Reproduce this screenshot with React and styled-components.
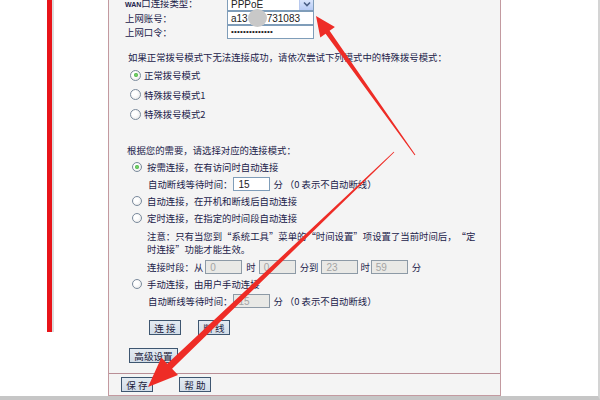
import styled, { createGlobalStyle } from 'styled-components';

const GlobalStyle = createGlobalStyle`
  html, body {
    margin: 0;
    padding: 0;
    background: #fff;
  }
  body {
    font-family: "Noto Sans CJK SC", "Liberation Sans", sans-serif;
    font-size: 9.4px;
    color: #22224a;
  }
`;

const Page = styled.div`
  position: relative;
  width: 600px;
  height: 400px;
  overflow: hidden;
  box-sizing: border-box;
  border-right: 2px solid #d4d4d4;
  border-bottom: 4px solid #c6c6c6;
  padding-left: 108px;
`;

const Panel = styled.div`
  width: 393px;
  height: 401px;
  margin-top: -5px;
  box-sizing: border-box;
  border: 1px solid #c39aa0;
  background: #f4f4f4;
  display: flex;
  flex-direction: column;
`;

const Content = styled.div`
  flex: 1;
  padding-top: 1px;
`;

const Footer = styled.div`
  height: 22px;
  box-sizing: border-box;
  border-top: 1px solid #b98e96;
  padding: 3px 0 0 12px;
  display: flex;
  gap: 26px;
`;

const TopForm = styled.div`
  display: grid;
  grid-template-columns: 102px 87px;
  grid-auto-rows: 14px;
  align-items: center;
  margin-left: 16px;
`;

const Label = styled.span`
  white-space: nowrap;
  line-height: 14px;
`;

const Wan = styled.span`
  font-family: "Liberation Sans", sans-serif;
  font-size: 7px;
  font-weight: bold;
`;

const Field = styled.div`
  height: 14px;
  box-sizing: border-box;
  border: 1px solid #7f9db9;
  background: #fff;
  display: flex;
  align-items: center;
  padding-left: 3px;
  font-family: "Liberation Sans", sans-serif;
  font-size: 10px;
  color: #222;
  white-space: nowrap;
`;

const SelectBox = styled(Field)`
  padding-right: 0;
  justify-content: space-between;
`;

const DropButton = styled.span`
  width: 13px;
  height: 12px;
  background: linear-gradient(#e0eafe, #b7cbf5);
  border-left: 1px solid #b8c9ee;
  display: flex;
  align-items: center;
  justify-content: center;
`;

const Blob = styled.span`
  display: inline-block;
  width: 19px;
  height: 18px;
  margin: -4px 0 -3px;
  border-radius: 50%;
  background: #c8c8c8;
  filter: blur(0.4px);
`;

const Dots = styled.span`
  font-size: 8px;
  letter-spacing: 0.2px;
  line-height: 8px;
`;

const Section = styled.div`
  margin-top: ${p => p.$top}px;
  padding-left: ${p => p.$indent}px;
`;

const Title = styled.div`
  line-height: 14px;
  height: 14px;
  white-space: nowrap;
`;

const List = styled.div`
  margin-top: ${p => p.$top || 0}px;
  margin-left: ${p => p.$shift || 0}px;
`;

const Row = styled.div`
  height: ${p => p.$h}px;
  display: flex;
  align-items: center;
  white-space: nowrap;
  margin-top: ${p => p.$top || 0}px;
  padding-left: ${p => p.$pad || 0}px;
`;

const Radio = styled.span`
  width: ${p => p.$size || 10}px;
  height: ${p => p.$size || 10}px;
  box-sizing: border-box;
  border-radius: 50%;
  border: 1px solid #7a8a9c;
  background: radial-gradient(circle at 40% 40%, #ffffff 30%, #e2e2e2 100%);
  margin-right: ${p => p.$gap}px;
  display: flex;
  align-items: center;
  justify-content: center;
  flex: none;

  &::after {
    content: '';
    width: 4px;
    height: 4px;
    border-radius: 50%;
    background: ${p => (p.$on ? 'radial-gradient(circle, #8ade7a, #1f9a1f)' : 'transparent')};
  }
`;

const Note = styled.div`
  line-height: 13px;
  margin-top: 3px;
  padding-left: 15px;
  white-space: nowrap;
`;

const Quote = styled.span`
  display: inline-block;
  width: 1em;
  line-height: 10px;
  text-align: ${p => (p.$open ? 'right' : 'left')};
`;

const Box = styled.span`
  width: ${p => p.$w || 37}px;
  height: 14px;
  box-sizing: border-box;
  margin: 0 ${p => p.$mr ?? 4}px 0 ${p => p.$ml ?? 3}px;
  border: 1px solid ${p => (p.$off ? '#8d9aa6' : '#7f9db9')};
  background: ${p => (p.$off ? '#e9e9e6' : '#fff')};
  color: ${p => (p.$off ? '#a4a4a4' : '#222')};
  font-family: "Liberation Sans", sans-serif;
  font-size: 10px;
  padding-left: 4px;
  display: flex;
  align-items: center;
`;

const Buttons = styled.div`
  display: flex;
  gap: ${p => p.$gap}px;
  margin-top: ${p => p.$top}px;
  padding-left: ${p => p.$pad}px;
`;

const Button = styled.span`
  height: 15px;
  width: ${p => p.$w || 32}px;
  box-sizing: border-box;
  border: 1px solid #3e5670;
  background: linear-gradient(#e4ebf2, #d2dde8);
  display: flex;
  align-items: center;
  justify-content: center;
  font-size: 9.6px;
  color: #1c1c3c;
  white-space: nowrap;
`;

const Overlay = styled.svg`
  position: absolute;
  left: 0;
  top: 0;
  width: 600px;
  height: 400px;
  pointer-events: none;
`;

function arrow(tip, tail, headLen, headHalf, neck, tailW) {
  const dx = tail[0] - tip[0];
  const dy = tail[1] - tip[1];
  const len = Math.hypot(dx, dy);
  const u = [dx / len, dy / len];
  const n = [-u[1], u[0]];
  const base = [tip[0] + u[0] * headLen, tip[1] + u[1] * headLen];
  const pt = (p, k) => `${(p[0] + n[0] * k).toFixed(1)},${(p[1] + n[1] * k).toFixed(1)}`;
  return [
    `${tip[0]},${tip[1]}`,
    pt(base, headHalf),
    pt(base, neck / 2),
    pt(tail, tailW / 2),
    pt(tail, -tailW / 2),
    pt(base, -neck / 2),
    pt(base, -headHalf),
  ].join(' ');
}

const arrowUp = arrow([316, 16], [415, 155], 20, 9, 5, 1);
const arrowDown = arrow([148, 387], [394, 152], 30, 12, 7, 0.8);

const Chevron = () => (
  <svg width="8" height="6" viewBox="0 0 8 6">
    <path d="M1 1.5 L4 4.5 L7 1.5" fill="none" stroke="#4a5f86" strokeWidth="1.6" />
  </svg>
);

export default function App() {
  return (
    <>
      <GlobalStyle />
      <Page>
        <Panel>
          <Content>
            <TopForm>
              <Label><Wan>WAN</Wan>口连接类型：</Label>
              <SelectBox>
                PPPoE
                <DropButton><Chevron /></DropButton>
              </SelectBox>
              <Label>上网账号：</Label>
              <Field>a13<Blob />731083</Field>
              <Label>上网口令：</Label>
              <Field><Dots>••••••••••••••</Dots></Field>
            </TopForm>

            <Section $top={11} $indent={19}>
              <Title>如果正常拨号模式下无法连接成功，请依次尝试下列模式中的特殊拨号模式：</Title>
              <List $top={1} $shift={2}>
                <Row $h={20}><Radio $on $size={11} $gap={3} />正常拨号模式</Row>
                <Row $h={19.5}><Radio $size={11} $gap={3} />特殊拨号模式1</Row>
                <Row $h={19.5}><Radio $size={11} $gap={3} />特殊拨号模式2</Row>
              </List>
            </Section>

            <Section $top={19} $indent={18}>
              <Title>根据您的需要，请选择对应的连接模式：</Title>
              <List $top={1.5} $shift={5}>
                <Row $h={17}><Radio $on $gap={5} />按需连接，在有访问时自动连接</Row>
                <Row $h={17} $pad={16}>
                  自动断线等待时间：<Box $ml={1} $mr={3}>15</Box>分 （0 表示不自动断线）
                </Row>
                <Row $h={17}><Radio $gap={5} />自动连接，在开机和断线后自动连接</Row>
                <Row $h={17}><Radio $gap={5} />定时连接，在指定的时间段自动连接</Row>
                <Note>
                  注意：只有当您到<Quote $open>“</Quote>系统工具<Quote>”</Quote>菜单的<Quote $open>“</Quote>时间设置<Quote>”</Quote>项设置了当前时间后，<Quote $open>“</Quote>定<br />
                  时连接<Quote>”</Quote>功能才能生效。
                </Note>
                <Row $h={17} $top={3} $pad={15}>
                  连接时段：从<Box $off $ml={2}>0</Box>时<Box $off>0</Box>分到<Box $off $mr={2}>23</Box>时<Box $off $ml={1}>59</Box>分
                </Row>
                <Row $h={17}><Radio $gap={5} />手动连接，由用户手动连接</Row>
                <Row $h={17} $pad={16}>
                  自动断线等待时间：<Box $off $ml={1} $mr={3}>15</Box>分 （0 表示不自动断线）
                </Row>
              </List>
              <Buttons $top={10.5} $pad={22} $gap={17}>
                <Button>连 接</Button>
                <Button>断 线</Button>
              </Buttons>
              <Buttons $top={13} $pad={2} $gap={0}>
                <Button $w={49}>高级设置</Button>
              </Buttons>
            </Section>
          </Content>
          <Footer>
            <Button>保 存</Button>
            <Button>帮 助</Button>
          </Footer>
        </Panel>

        <Overlay viewBox="0 0 600 400">
          <rect x="52" y="0" width="2" height="332" fill="#dcdcdc" />
          <rect x="47" y="0" width="5" height="332" fill="#e81419" />
          <polygon points={arrowUp} fill="#ee2c26" />
          <polygon points={arrowDown} fill="#ee2c26" />
        </Overlay>
      </Page>
    </>
  );
}
